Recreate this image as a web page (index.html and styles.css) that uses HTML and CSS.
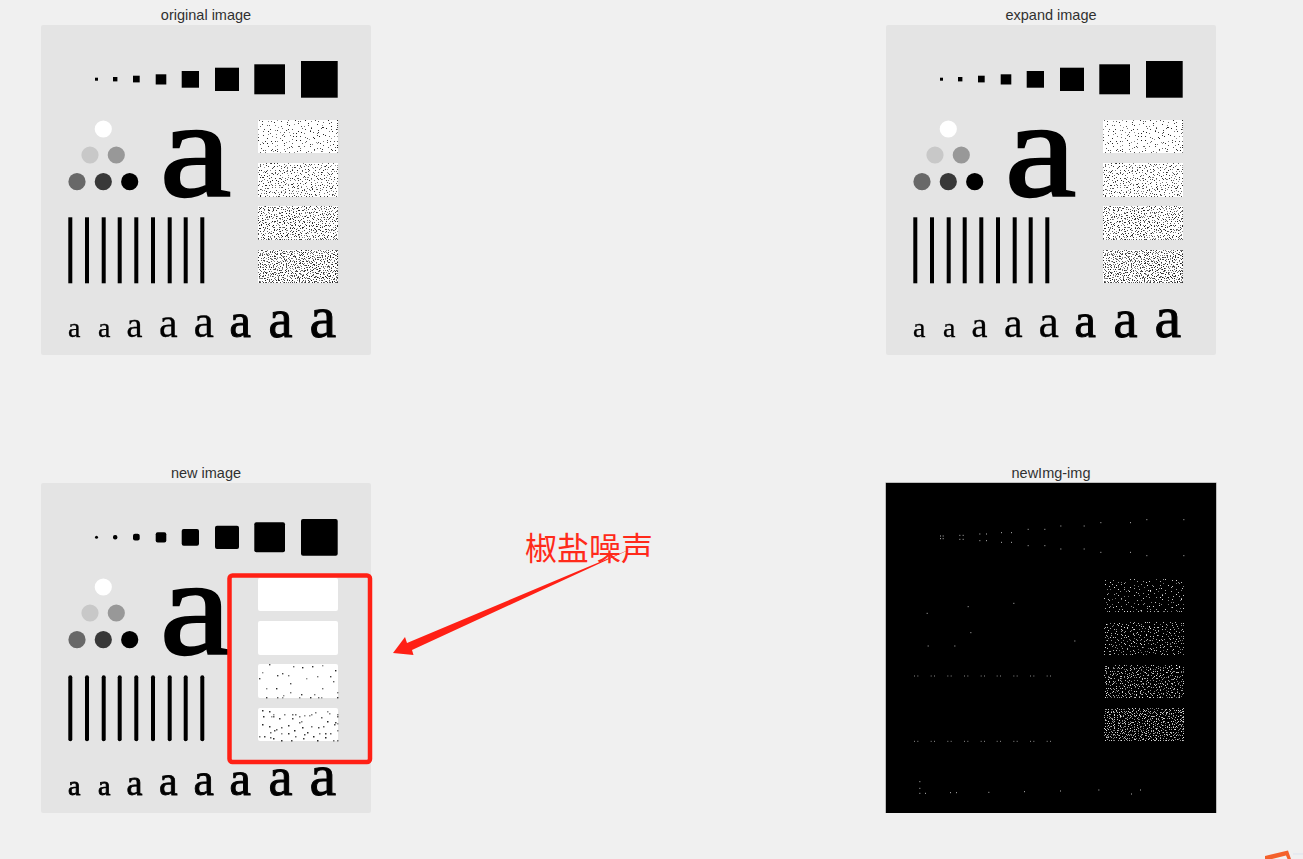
FILE: index.html
```html
<!DOCTYPE html>
<html lang="zh">
<head>
    <meta charset="UTF-8">
    <meta name="viewport" content="width=device-width, initial-scale=1.0">
    <title>椒盐噪声</title>
    <link rel="stylesheet" href="styles.css">
</head>
<body>
    <div class="figure">
        <div class="panel">
            <div class="panel-title">original image</div>
            <svg class="plate" viewBox="0 0 330 330">
                <defs>
                    <g id="chart">
                        <!-- squares -->
                        <rect class="shape" x="54" y="52.7" width="3" height="3"/>
                        <rect class="shape" x="72" y="52" width="4.4" height="4.4"/>
                        <rect class="shape" x="92" y="50.7" width="6.7" height="6.7"/>
                        <rect class="shape" x="114.7" y="49.3" width="10.6" height="10.2"/>
                        <rect class="shape" x="140.7" y="46" width="17.3" height="16.7"/>
                        <rect class="shape" x="174" y="42.7" width="24" height="23.3"/>
                        <rect class="shape" x="213.3" y="39.3" width="30.7" height="30"/>
                        <rect class="shape" x="260" y="36" width="36.7" height="36.7"/>
                        <!-- circles -->
                        <circle cx="62.3" cy="104" r="8.6" fill="#fff"/>
                        <circle cx="49" cy="130" r="8.6" fill="#c8c8c8"/>
                        <circle cx="75.3" cy="130" r="8.6" fill="#989898"/>
                        <circle cx="36" cy="156.7" r="8.6" fill="#686868"/>
                        <circle cx="62.3" cy="156.7" r="8.6" fill="#383838"/>
                        <circle cx="88.7" cy="156.7" r="8.6" fill="#000"/>
                        <!-- big letter -->
                        <text class="letter letter-big" transform="translate(119 171) scale(1.16 1)" font-size="138">a</text>
                        <!-- bars -->
                        <rect class="shape" x="27.3" y="192.3" width="4" height="66"/>
                        <rect class="shape" x="44" y="192.3" width="4" height="66"/>
                        <rect class="shape" x="60.7" y="192.3" width="4" height="66"/>
                        <rect class="shape" x="76.7" y="192.3" width="4" height="66"/>
                        <rect class="shape" x="93.3" y="192.3" width="4" height="66"/>
                        <rect class="shape" x="110" y="192.3" width="4" height="66"/>
                        <rect class="shape" x="126.7" y="192.3" width="4" height="66"/>
                        <rect class="shape" x="142.7" y="192.3" width="4" height="66"/>
                        <rect class="shape" x="159.3" y="192.3" width="4" height="66"/>
                        <!-- small letters -->
                        <text class="letter" x="27" y="311.5" font-size="28">a</text>
                        <text class="letter" x="57" y="311.5" font-size="28">a</text>
                        <text class="letter" x="85.5" y="311.5" font-size="36">a</text>
                        <text class="letter" x="118" y="311.5" font-size="42">a</text>
                        <text class="letter" x="152.5" y="311.5" font-size="46">a</text>
                        <text class="letter letter-bold" x="188.5" y="311.5" font-size="48">a</text>
                        <text class="letter letter-bold" x="227.5" y="311.5" font-size="54">a</text>
                        <text class="letter letter-bold" x="268.5" y="311.5" font-size="60">a</text>
                    </g>
                    <g id="blocks">
                        <rect class="block" x="217" y="95" width="80" height="33"/>
                        <rect class="block" x="217" y="138" width="80" height="34"/>
                        <rect class="block" x="217" y="181" width="80" height="34"/>
                        <rect class="block" x="217" y="225" width="80" height="33"/>
                    </g>
                </defs>
                <use href="#chart"/>
                <use href="#blocks"/>
                <g class="noise" data-box="217 95 80 33" data-density="0.07" data-seed="11"></g>
                <g class="noise" data-box="217 138 80 34" data-density="0.14" data-seed="12"></g>
                <g class="noise" data-box="217 181 80 34" data-density="0.21" data-seed="13"></g>
                <g class="noise" data-box="217 225 80 33" data-density="0.28" data-seed="14"></g>
            </svg>
        </div>

        <div class="panel">
            <div class="panel-title">expand image</div>
            <svg class="plate" viewBox="0 0 330 330">
                <use href="#chart"/>
                <use href="#blocks"/>
                <g class="noise" data-box="217 95 80 33" data-density="0.07" data-seed="11"></g>
                <g class="noise" data-box="217 138 80 34" data-density="0.14" data-seed="12"></g>
                <g class="noise" data-box="217 181 80 34" data-density="0.21" data-seed="13"></g>
                <g class="noise" data-box="217 225 80 33" data-density="0.28" data-seed="14"></g>
            </svg>
        </div>

        <div class="panel">
            <div class="panel-title">new image</div>
            <svg class="plate plate-filtered" viewBox="0 0 330 330">
                <use href="#chart"/>
                <use href="#blocks"/>
                <g class="noise" data-box="217 181 80 34" data-density="0.009" data-dot="1.4" data-seed="23"></g>
                <g class="noise" data-box="217 225 80 33" data-density="0.02" data-dot="1.5" data-seed="24"></g>
            </svg>
        </div>

        <div class="panel">
            <div class="panel-title">newImg-img</div>
            <svg class="plate plate-diff" viewBox="0 0 330 330">
                <g id="diffSpecks"></g>
                <g class="noise" data-box="218 96 80 33" data-density="0.06" data-seed="31"></g>
                <g class="noise" data-box="218 139 80 33" data-density="0.11" data-seed="32"></g>
                <g class="noise" data-box="218 182 80 33" data-density="0.17" data-seed="33"></g>
                <g class="noise" data-box="218 225 80 33" data-density="0.23" data-seed="34"></g>
            </svg>
        </div>
    </div>

    <div class="note-label">椒盐噪声</div>

    <!-- 红框和箭头 -->
    <svg class="marks" viewBox="0 0 1303 859">
        <rect class="mark-box" x="229.5" y="575.5" width="140.5" height="186.5" rx="3"/>
        <polygon class="mark-arrow" points="393,653 405,637 407,643 633,548 412,650 413.5,655"/>
        <polygon class="mark-logo" points="1265,856 1288,850.5 1291,859 1287.5,859 1286,855.5 1272,859 1265,859"/>
        <line class="mark-edge" x1="1293" y1="854" x2="1303" y2="854"/>
    </svg>

    <script src="script.js"></script>
</body>
</html>
```

FILE: styles.css
```css
body {
    margin: 0;
    background-color: #f0f0f0;
    font-family: 'Liberation Sans', Arial, sans-serif;
    overflow: hidden;
}
.figure {
    display: grid;
    grid-template-columns: 330px 330px;
    column-gap: 515px;
    row-gap: 110px;
    padding: 7px 0 0 41px;
}
.panel-title {
    height: 18px;
    line-height: 16px;
    font-size: 14.5px;
    color: #303030;
    text-align: center;
}
.plate {
    display: block;
    width: 330px;
    height: 330px;
    background: #e4e4e4;
    border-radius: 2px;
    filter: blur(0.35px);
}
.plate-filtered {
    --corner: 2px;
    --grow: 0.8px;
}
.plate-diff {
    background: #000;
    border-radius: 0;
    box-shadow: 0 0 0 0.5px #8a8a8a;
}
.shape {
    fill: #000;
    rx: var(--corner, 0);
}
.block {
    fill: #fff;
    rx: var(--corner, 0);
}
.letter {
    font-family: 'Liberation Serif', 'Times New Roman', serif;
    fill: #000;
    stroke: #000;
    stroke-width: var(--grow, 0.3px);
}
.letter-bold {
    stroke-width: 1px;
}
.letter-big {
    stroke-width: 2.4px;
}
.noise rect {
    fill: #000;
}
.plate-diff .noise rect,
#diffSpecks rect {
    fill: #fff;
}
.note-label {
    position: absolute;
    left: 525px;
    top: 523px;
    font-family: 'Noto Sans CJK SC', sans-serif;
    font-size: 32px;
    font-weight: 400;
    line-height: 46px;
    color: #ff2a1a;
}
.marks {
    position: absolute;
    left: 0;
    top: 0;
    width: 1303px;
    height: 859px;
    pointer-events: none;
}
.mark-box {
    fill: none;
    stroke: #ff2015;
    stroke-width: 4.5;
}
.mark-arrow {
    fill: #ff2015;
}
.mark-logo {
    fill: #f4612b;
}
.mark-edge {
    stroke: #dde3ee;
    stroke-width: 1;
}
```

FILE: script.js
```js
// 固定种子，每次画出来的噪声都一样
function makeRandom(seed) {
    let s = seed * 7919;
    return function () {
        s = (s + 0x6D2B79F5) | 0;
        let t = Math.imul(s ^ (s >>> 15), 1 | s);
        t = (t + Math.imul(t ^ (t >>> 7), 61 | t)) ^ t;
        return ((t ^ (t >>> 14)) >>> 0) / 4294967296;
    };
}

function addDot(group, x, y, size, opacity) {
    const dot = document.createElementNS('http://www.w3.org/2000/svg', 'rect');
    dot.setAttribute('x', x);
    dot.setAttribute('y', y);
    dot.setAttribute('width', size);
    dot.setAttribute('height', size);
    dot.setAttribute('opacity', opacity);
    group.appendChild(dot);
}

// 每个小格放一个点，这样分布比较均匀，不会结块
document.querySelectorAll('.noise').forEach(function (group) {
    const box = group.dataset.box.split(' ').map(Number);
    const density = Number(group.dataset.density);
    const size = Number(group.dataset.dot || 1);
    const random = makeRandom(Number(group.dataset.seed));
    const cell = Math.sqrt(1 / density);
    for (let cy = 0; cy < box[3]; cy += cell) {
        for (let cx = 0; cx < box[2]; cx += cell) {
            const x = Math.min(box[0] + Math.floor(cx + random() * cell), box[0] + box[2] - 1);
            const y = Math.min(box[1] + Math.floor(cy + random() * cell), box[1] + box[3] - 1);
            addDot(group, x, y, size, (0.4 + random() * 0.5).toFixed(2));
        }
    }
});

// 差值图里方块四角、竖线两端留下的小点
const specks = document.getElementById('diffSpecks');
const squares = [
    [180, 188, 228, 236], [238, 248, 226, 238], [298, 318, 222, 242],
    [363, 393, 218, 247], [443, 493, 208, 257], [541, 611, 198, 267],
    [661, 750, 188, 277], [799, 910, 179, 287]
];
const strays = [
    [263, 440], [400, 430], [140, 460], [271, 518], [583, 543], [143, 558], [223, 558],
    [118, 965], [118, 985], [118, 1000], [135, 1000], [210, 998], [228, 998],
    [325, 997], [432, 995], [540, 993], [655, 990], [753, 1002], [780, 990]
];
const barLeft = [102, 152, 202, 252, 302, 350, 400, 450, 500];

function putSpeck(zx, zy, opacity) {
    addDot(specks, zx / 3 - 6, zy / 3 - 23.5, 1, opacity);
}

squares.forEach(function (q) {
    putSpeck(q[0], q[2], 0.7);
    putSpeck(q[1], q[2], 0.7);
    putSpeck(q[0], q[3], 0.7);
    putSpeck(q[1], q[3], 0.7);
});
strays.forEach(function (p) {
    putSpeck(p[0], p[1], 0.7);
});
barLeft.forEach(function (x) {
    [648, 844].forEach(function (y) {
        putSpeck(x, y, 0.55);
        putSpeck(x + 10, y, 0.55);
    });
});
```
